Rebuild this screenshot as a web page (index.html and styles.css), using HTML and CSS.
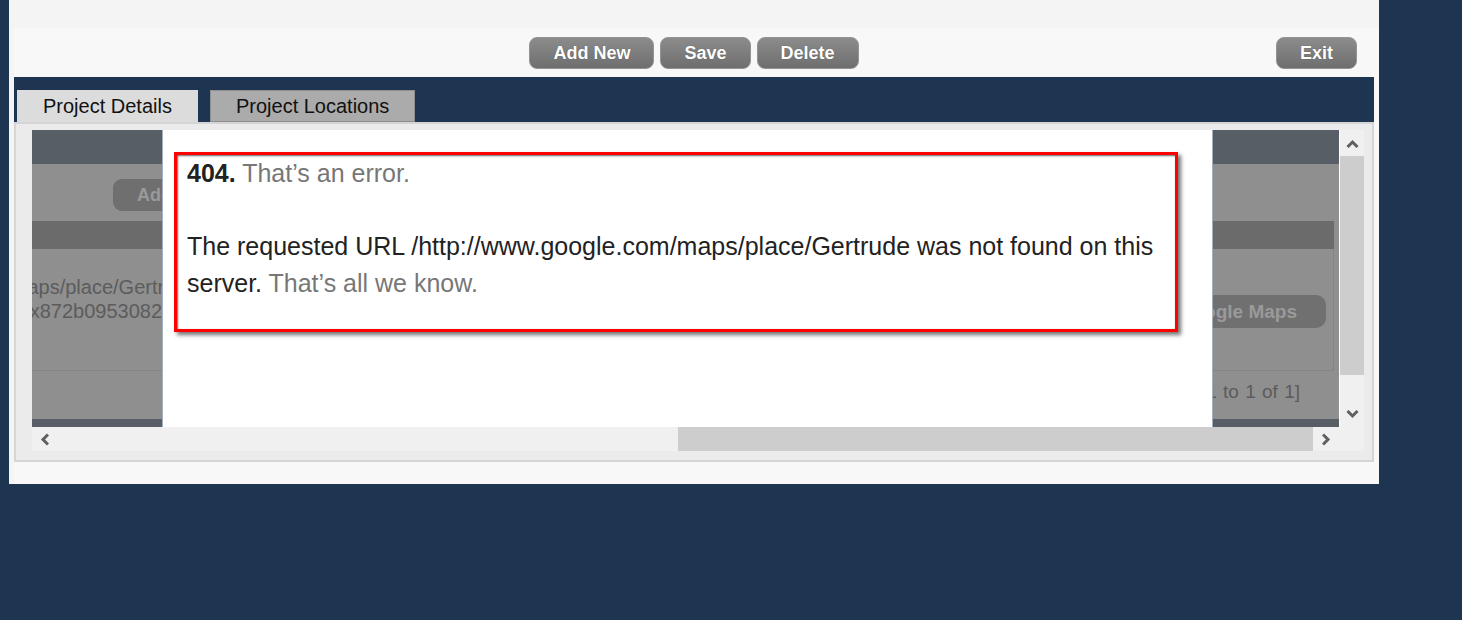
FILE: index.html
```html
<!DOCTYPE html>
<html>
<head>
	<meta charset="utf-8">
	<title>Project Locations</title>
	<link rel="stylesheet" href="styles.css">
</head>
<body>
	<div class="app">
		<div class="panel">
			<div class="toolbar">
				<div class="actions">
					<button class="btn">Add New</button>
					<button class="btn">Save</button>
					<button class="btn">Delete</button>
				</div>
				<button class="btn btn-exit">Exit</button>
			</div>

			<div class="tabbar">
				<div class="tab">Project Details</div>
				<div class="tab tab-off">Project Locations</div>
			</div>

			<div class="content">
				<div class="viewport">
					<div class="frame">
						<!-- dimmed page under the popup -->
						<div class="bg-page">
							<div class="bg-head"></div>
							<div class="bg-actions"><span class="bg-btn">Add New</span></div>
							<div class="bg-table">
								<div class="bg-thead"></div>
								<div class="bg-row">
									<div class="bg-url">
										<div class="line1">https://www.google.com/maps/place/Gertrude,+AB/@53.54,-113.49</div>
										<div class="line2">!4m5!3m4!1s0x872b0953082f1e5:0x9f3c</div>
									</div>
									<span class="bg-maps">Google Maps</span>
								</div>
								<div class="bg-pager">[1 to 1 of 1]</div>
							</div>
							<div class="bg-foot"></div>
						</div>

						<div class="modal">
							<div class="err">
								<p><b>404.</b> <span class="muted">That’s an error.</span></p>
								<p class="msg">The requested URL /http://www.google.com/maps/place/Gertrude was not found on this server. <span class="muted">That’s all we know.</span></p>
							</div>
						</div>
					</div>

					<div class="vbar">
						<div class="sb-btn sb-v">
							<svg width="13" height="9" viewBox="0 0 13 9"><polyline points="1.5,8 6.5,3 11.5,8"/></svg>
						</div>
						<div class="vthumb"></div>
						<div class="sb-fill"></div>
						<div class="sb-btn sb-v">
							<svg width="13" height="9" viewBox="0 0 13 9"><polyline points="1.5,1 6.5,6 11.5,1"/></svg>
						</div>
					</div>

					<div class="hbar">
						<div class="sb-btn sb-h">
							<svg width="9" height="13" viewBox="0 0 9 13"><polyline points="8,1.5 3,6.5 8,11.5"/></svg>
						</div>
						<div class="hfill"></div>
						<div class="hthumb"></div>
						<div class="sb-btn sb-h sb-last">
							<svg width="9" height="13" viewBox="0 0 9 13"><polyline points="1,1.5 6,6.5 1,11.5"/></svg>
						</div>
					</div>
					<div class="corner"></div>
				</div>
			</div>
		</div>
	</div>
</body>
</html>
```

FILE: styles.css
```css
*{
	margin: 0;
	padding: 0;
	box-sizing: border-box;
}
body{
	background: #1e3551;
	font-family: "Liberation Sans", Arial, sans-serif;
}
.app{
	width: 1370px;
	margin-left: 9px;
	padding-top: 28px;
	background: #f4f4f4;
}
.panel{
	margin-left: 5px;
	padding-bottom: 22px;
	background: #f8f8f8;
}

/* top buttons */
.toolbar{
	height: 49px;
	margin-right: 5px;
	padding-top: 9px;
	display: grid;
	grid-template-columns: 1fr auto 1fr;
	align-items: start;
}
.actions{
	grid-column: 2;
	display: flex;
	gap: 6px;
}
.btn{
	height: 32px;
	padding: 0 23px;
	border: 1px solid #939393;
	border-radius: 8px;
	background: linear-gradient(#8c8c8c, #6e6e6e);
	color: #fff;
	font: 700 18px/30px "Liberation Sans", Arial, sans-serif;
	text-shadow: 0 0 1px rgba(0,0,0,.35);
}
.btn-exit{
	grid-column: 3;
	justify-self: end;
	margin-right: 17px;
}

/* tabs */
.tabbar{
	height: 45px;
	margin-right: 5px;
	padding: 13px 0 0 3px;
	background: #1e3551;
	display: flex;
	gap: 12px;
}
.tab{
	height: 32px;
	padding: 0 26px;
	background: #dcdcdc;
	color: #111;
	font-size: 20px;
	line-height: 32px;
}
.tab-off{
	padding: 0 25px;
	background: #ababab;
	border: 1px solid #8e8e8e;
	line-height: 30px;
}

/* framed area */
.content{
	margin-right: 5px;
	border: 2px solid #d5d5d5;
	background: #ebebeb;
	padding: 6px 8px 9px 16px;
}
.viewport{
	display: grid;
	grid-template-columns: 1308px 24px;
	grid-template-rows: 297px 24px;
	background: #f0f0f0;
}
.frame{
	position: relative;
	overflow: hidden;
	background: #8f8f8f;
	border-right: 1px solid #fff;
}
.bg-head{
	height: 34px;
	background: #575e66;
}
.bg-actions{
	height: 57px;
	padding: 15px 0 0 81px;
}
.bg-btn{
	display: inline-block;
	height: 32px;
	padding: 0 24px;
	border-radius: 9px;
	background: #6f6f6f;
	color: #9a9a9a;
	font-size: 18px;
	font-weight: 700;
	line-height: 32px;
}
.bg-table{
	margin-right: 5px;
}
.bg-thead{
	height: 28px;
	background: #6b6b6b;
}
.bg-row{
	height: 122px;
	padding: 26px 7px 0 0;
	border-right: 1px solid #858585;
	border-bottom: 1px solid #858585;
	display: flex;
	justify-content: space-between;
	align-items: flex-start;
}
.bg-url{
	flex: none;
	color: #5c5c5c;
	font-size: 20px;
	line-height: 24px;
	white-space: nowrap;
}
.bg-url .line1{
	margin-left: -238px;
}
.bg-url .line2{
	margin-left: -129px;
}
.bg-maps{
	flex: none;
	margin-top: 20px;
	height: 33px;
	padding: 0 29px;
	border-radius: 10px;
	background: #707070;
	color: #9a9a9a;
	font-size: 19px;
	font-weight: 700;
	line-height: 33px;
}
.bg-pager{
	height: 48px;
	padding-right: 34px;
	text-align: right;
	color: #5c5c5c;
	font-size: 19px;
	line-height: 41px;
	word-spacing: 1px;
}
.bg-foot{
	height: 8px;
	background: #575e66;
}

/* popup with the error page */
.modal{
	position: absolute;
	left: 130px;
	top: 0;
	bottom: 0;
	width: 1051px;
	padding: 22px 0 0 11px;
	background: #fff;
	border-left: 1px solid #a4afbc;
	border-right: 1px solid #a4afbc;
}
.err{
	width: 1004px;
	padding: 0 9px 27px 10px;
	border: 3px solid #f00;
	box-shadow: 3px 3px 4px rgba(0,0,0,.55), inset 1px 1px 2px rgba(0,0,0,.6);
	color: #222;
	font-size: 25px;
	line-height: 36.67px;
}
.err .msg{
	margin-top: 36.67px;
}
.muted{
	color: #777;
}

/* scrollbars */
.vbar{
	display: flex;
	flex-direction: column;
}
.sb-btn{
	display: flex;
	align-items: center;
	justify-content: center;
}
.sb-btn polyline{
	fill: none;
	stroke: #5f5f5f;
	stroke-width: 3;
}
.sb-v{
	height: 26px;
}
.vthumb{
	height: 219px;
	background: #cdcdcd;
}
.sb-fill{
	flex: 1;
}
.hbar{
	display: flex;
}
.sb-h{
	width: 24px;
}
.hfill{
	width: 622px;
}
.hthumb{
	width: 635px;
	background: #cdcdcd;
}
.sb-last{
	flex: 1;
}
.corner{
	background: #f0f0f0;
}
```
